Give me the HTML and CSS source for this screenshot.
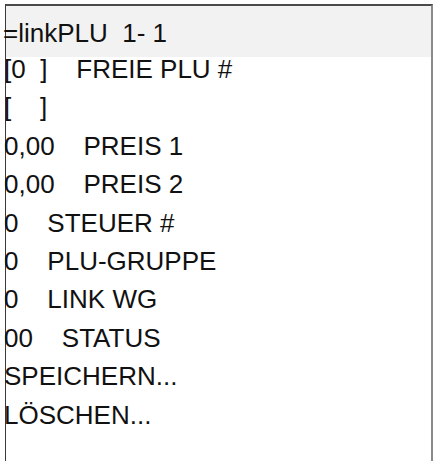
FILE: index.html
```html
<!DOCTYPE html>
<html lang="de">
<head>
<meta charset="utf-8">
<title>linkPLU</title>
<link rel="stylesheet" href="styles.css">
</head>
<body>
<div class="frame">
  <div class="header"><span class="txt">=linkPLU  1- 1</span></div>
  <ul class="menu">
    <li class="row">[0  ]    FREIE PLU #</li>
    <li class="row">[    ]</li>
    <li class="row">0,00    PREIS 1</li>
    <li class="row">0,00    PREIS 2</li>
    <li class="row">0    STEUER #</li>
    <li class="row">0    PLU-GRUPPE</li>
    <li class="row">0    LINK WG</li>
    <li class="row">00    STATUS</li>
    <li class="row">SPEICHERN...</li>
    <li class="row">LÖSCHEN...</li>
  </ul>
</div>
</body>
</html>
```

FILE: styles.css
```css
html, body {
  margin: 0;
  padding: 0;
  background: #ffffff;
}

body {
  font-family: "Liberation Sans", Arial, sans-serif;
  color: #111111;
  width: 434px;
  height: 462px;
  overflow: hidden;
}

.frame {
  margin: 4px 0 0 5px;
  width: 425px;
  height: 455px;
  border-top: 2px solid #4a4a4a;
  border-left: 1px solid #3a3a3a;
  border-right: 2px solid #8a8a8a;
  background: #ffffff;
}

.header {
  height: 51px;
  background: #f2f2f2;
  font-size: 26px;
  line-height: 47px;
  padding-top: 4px;
  box-sizing: border-box;
  white-space: pre;
}

.txt {
  margin-left: -3px;
}

/* menu rows sit slightly into the title band */
.menu {
  list-style: none;
  margin: -7px 0 0 0;
  padding: 0;
}

.row {
  font-size: 26px;
  line-height: 38.4px;
  height: 38.4px;
  white-space: pre;
  margin-left: -2px;
}
```
